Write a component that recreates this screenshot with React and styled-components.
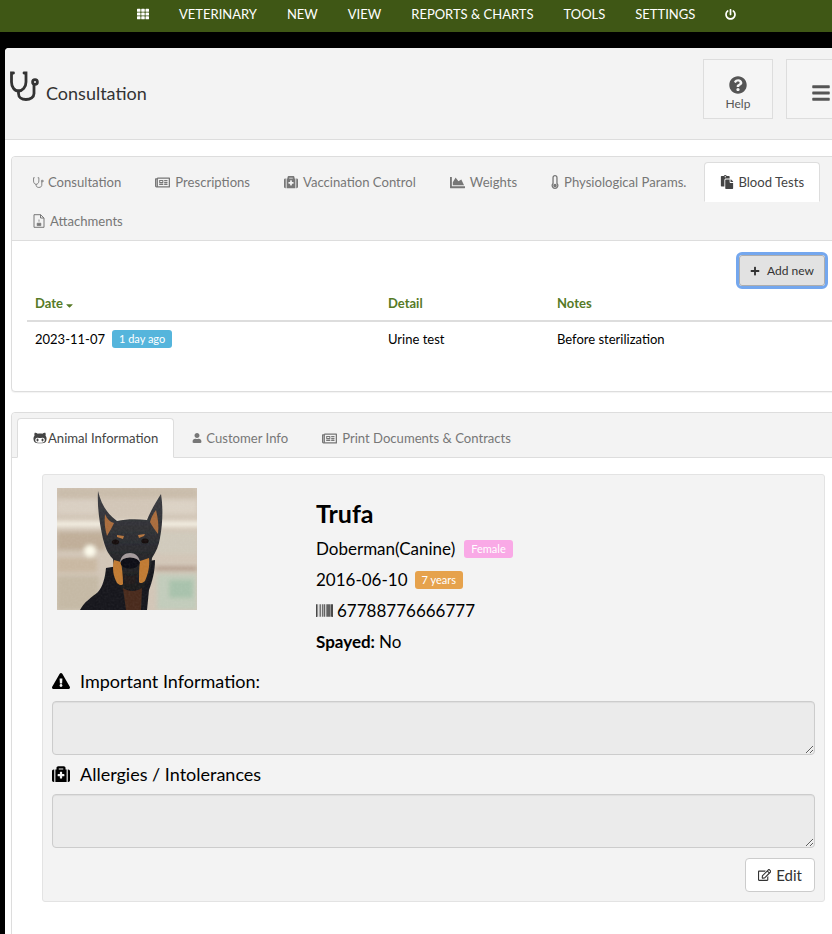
import React from 'react';
import styled, { createGlobalStyle } from 'styled-components';
import {
  FaTh, FaPowerOff, FaQuestionCircle, FaBars, FaRegNewspaper, FaMedkit, FaChartArea,
  FaThermometerEmpty, FaPaste, FaGithubAlt, FaUser, FaPlus, FaCaretDown,
  FaExclamationTriangle, FaBarcode, FaRegEdit,
} from 'react-icons/fa';

const GlobalStyle = createGlobalStyle`
  html, body {
    margin: 0;
    height: 934px;
    overflow: hidden;
    background: #000;
    font-family: Lato, "Open Sans", sans-serif;
    color: #000;
  }
  * { box-sizing: border-box; }
`;

const TopNav = styled.nav`
  display: flex;
  align-items: center;
  height: 32px;
  padding: 0 0 4px 122px;
  background: #3f5715;
  color: #fff;
  font-size: 13px;
`;

const NavItem = styled.a`
  display: flex;
  align-items: center;
  padding: 0 15px;
  white-space: nowrap;
  svg { font-size: ${({ $icon }) => $icon || '12px'}; }
`;

const Main = styled.main`
  width: 864px;
  height: 886px;
  margin: 16px 0 0 5px;
  background: #fff;
  border-top-left-radius: 4px;
  overflow: hidden;
`;

const PageHeader = styled.header`
  display: flex;
  align-items: flex-start;
  height: 92px;
  padding: 11px 13px 0 5px;
  background: #f3f3f3;
  border-bottom: 1px solid #ddd;
`;

const PageTitle = styled.h1`
  display: flex;
  align-items: flex-end;
  gap: 6px;
  flex: 1;
  margin: 12px 0 0;
  font-size: 18px;
  font-weight: 400;
  line-height: 22px;
  color: #333;
  svg { display: block; margin-bottom: 3px; }
`;

const HeaderButton = styled.button`
  display: flex;
  flex-direction: column;
  align-items: center;
  justify-content: center;
  gap: 2px;
  width: 70px;
  height: 60px;
  margin-left: 13px;
  padding: 8px 0 0;
  background: #f5f5f5;
  border: 1px solid #ddd;
  color: #555;
  font: 400 12px Lato, sans-serif;
  svg { font-size: ${({ $icon }) => $icon || '18px'}; }
`;

const Card = styled.section`
  margin: ${({ $top }) => $top} 6px 0;
  background: #fff;
  border: 1px solid #ddd;
  border-radius: 4px;
  box-shadow: 0 1px 1px rgba(0, 0, 0, 0.05);
`;

const TabStrip = styled.div`
  display: flex;
  flex-wrap: wrap;
  padding: 5px 5px 0;
  background: #f3f3f3;
  border-bottom: 1px solid #ddd;
  border-radius: 4px 4px 0 0;
`;

const Tab = styled.a`
  display: flex;
  align-items: center;
  gap: ${({ $gap }) => $gap || '5px'};
  height: 40px;
  margin: 0 2px -1px 0;
  padding: 0 15px;
  font-size: 13.1px;
  white-space: nowrap;
  color: ${({ $active }) => ($active ? '#444' : '#777')};
  background: ${({ $active }) => ($active ? '#fff' : 'transparent')};
  border: 1px solid ${({ $active }) => ($active ? '#ddd' : 'transparent')};
  border-bottom-color: ${({ $active }) => ($active ? '#fff' : 'transparent')};
  border-radius: 4px 4px 0 0;
  svg { flex: none; }
`;

const ThermoIcon = styled(FaThermometerEmpty)`
  width: 8px;
  height: 14px;
`;

const TabBody = styled.div`
  height: 150px;
  padding-top: 14px;
`;

const Toolbar = styled.div`
  display: flex;
  justify-content: flex-end;
  padding-right: 37px;
`;

const AddButton = styled.button`
  display: flex;
  align-items: center;
  gap: 7px;
  height: 31px;
  padding: 0 10px;
  background: #e2e2e2;
  border: 1px solid #adadad;
  border-radius: 3px;
  outline: 3px solid #74a7ee;
  outline-offset: 0;
  color: #333;
  font: 400 12px Lato, sans-serif;
`;

const HeadRow = styled.div`
  display: grid;
  grid-template-columns: 353px 169px 1fr;
  height: 33px;
  margin: 3px 0 0 15px;
  padding: 0 8px;
  font-size: 13px;
  font-weight: 700;
  line-height: 28px;
  color: #567a26;
  border-bottom: 2px solid #ddd;
`;

const DataRow = styled.div`
  display: grid;
  grid-template-columns: 353px 169px 1fr;
  align-items: center;
  height: 34px;
  margin-left: 15px;
  padding: 0 8px;
  font-size: 13px;
`;

const SortCaret = styled(FaCaretDown)`
  vertical-align: -3px;
  margin-left: -2px;
`;

const DateCell = styled.span`
  display: flex;
  align-items: center;
  gap: 7px;
`;

const Badge = styled.span`
  height: 18px;
  padding: 0 7px;
  line-height: 18px;
  border-radius: 3px;
  background: ${({ $color }) => $color};
  color: #fff;
  font-size: 11px;
  font-weight: 400;
`;

const Panel = styled.div`
  height: 520px;
  padding: 16px 37px 0 30px;
`;

const Well = styled.div`
  height: 428px;
  padding: 13px 9px 0;
  background: #f3f3f3;
  border: 1px solid #e3e3e3;
  border-radius: 3px;
`;

const Profile = styled.div`
  display: flex;
  height: 179px;
  padding-left: 5px;
`;

const Photo = styled.svg`
  display: block;
  flex: none;
  width: 140px;
  height: 122px;
  margin-right: 119px;
`;

const Facts = styled.div`
  display: flex;
  flex-direction: column;
  font-size: 17px;
  line-height: 31px;
`;

const PetName = styled.h2`
  margin: 6px 0 1px;
  font-size: 25px;
  line-height: 38px;
  font-weight: 700;
`;

const Fact = styled.div`
  display: flex;
  align-items: center;
  gap: ${({ $gap }) => $gap || '7px'};
  white-space: nowrap;
`;

const FieldLabel = styled.div`
  display: flex;
  align-items: center;
  gap: 10px;
  height: 30px;
  margin-top: ${({ $top }) => $top || '0'};
  padding-bottom: 2px;
  font-size: 18px;
  line-height: 22px;
  svg { flex: none; width: 18px; }
`;

const Note = styled.textarea`
  display: block;
  width: 763px;
  height: 54px;
  margin: 4px 0 0;
  background: #ebebeb;
  border: 1px solid #ccc;
  border-radius: 4px;
  box-shadow: inset 0 1px 1px rgba(0, 0, 0, 0.06);
  resize: both;
`;

const WellActions = styled.div`
  display: flex;
  justify-content: flex-end;
  width: 763px;
  margin-top: 10px;
`;

const EditButton = styled.button`
  display: flex;
  align-items: center;
  gap: 5px;
  width: 70px;
  height: 34px;
  padding: 0 12px;
  background: #fff;
  border: 1px solid #ccc;
  border-radius: 4px;
  color: #333;
  font: 400 15px Lato, sans-serif;
`;

const Stethoscope = ({ size = 30, width = 2.8 }) => (
  <svg width={size} height={size} viewBox="0 0 30 30" fill="none" stroke="currentColor" strokeWidth={width} strokeLinecap="round">
    <path d="M3.500 2H1.500v9c0 5 3 9 7 9s7.500-4 7.500-9V2h-2" />
    <path d="M8.500 20v2.500c0 3.600 3 6 7.500 6s8-2.500 8-6V14" />
    <circle cx="25" cy="11" r="2.400" />
  </svg>
);

const SmallFile = () => (
  <svg width="12" height="14" viewBox="0 0 12 14" fill="none" stroke="currentColor">
    <path d="M1 .7h6.600L11 4v9.300H1z" />
    <path d="M7.500 .7V4H11" />
    <path d="M6 5.500v2.200M4.200 9.200h3.600v2.400H4.200z" fill="currentColor" strokeWidth=".8" />
  </svg>
);

const DogPhoto = () => (
  <Photo viewBox="0 0 140 122">
    <defs>
      <filter id="soft" x="-20%" y="-20%" width="140%" height="140%">
        <feGaussianBlur stdDeviation="2.200" />
      </filter>
      <filter id="softer">
        <feGaussianBlur stdDeviation="0.600" />
      </filter>
      <filter id="grain">
        <feTurbulence type="fractalNoise" baseFrequency="0.5" numOctaves="2" seed="4" />
        <feColorMatrix values="0 0 0 0 1  0 0 0 0 1  0 0 0 0 1  0.9 0 0 0 -0.3" />
      </filter>
      <linearGradient id="face" x1="0" y1="0" x2="0" y2="1">
        <stop offset="0" stopColor="#3c3d42" />
        <stop offset="0.5" stopColor="#2c2d31" />
        <stop offset="1" stopColor="#18181b" />
      </linearGradient>
      <clipPath id="frame">
        <rect width="140" height="122" />
      </clipPath>
    </defs>
    <g clipPath="url(#frame)">
      <rect width="140" height="122" fill="#d2c6b7" />
      <g filter="url(#soft)">
        <rect x="0" y="0" width="140" height="10" fill="#c9bcaa" />
        <rect x="0" y="12" width="40" height="14" fill="#d9cfc2" />
        <rect x="100" y="12" width="40" height="14" fill="#dbd2c5" />
        <rect x="-5" y="33" width="150" height="6" fill="#f1ece0" />
        <rect x="0" y="44" width="48" height="18" fill="#c0ae99" />
        <rect x="100" y="44" width="40" height="22" fill="#d0cabc" />
        <circle cx="33" cy="63" r="6" fill="#fdfbec" />
        <rect x="0" y="70" width="40" height="14" fill="#c9b8a2" />
        <rect x="0" y="88" width="42" height="34" fill="#c5b9a5" />
        <rect x="100" y="86" width="40" height="36" fill="#c2ccbb" />
        <rect x="112" y="92" width="24" height="18" fill="#a8c2ac" />
        <rect x="98" y="79" width="42" height="3" fill="#a88e7e" />
      </g>
      <g filter="url(#softer)">
        <path d="M23 122c4-8 12-13 18-18 5-6 7-14 8-24l49-8c0 12-3 22-6 30l-2 20z" fill="#17181c" />
        <path d="M41 3c3 12 8 22 19 30 9-2 20-2 30-1 4-10 9-18 14-26 2 12 2 28-1 44-1 7-4 14-8 20-1 12-5 26-11 33-6 3-12 3-18 0-6-7-9-20-10-32-6-6-8-13-10-20-3-14-6-31-5-48z" fill="url(#face)" />
        <path d="M48 26c2 5 5 8 9 9-2 5-5 9-7 13-2-7-3-14-2-22z" fill="#a96c3d" />
        <path d="M99 22c-3 4-5 8-6 12 2 4 5 8 8 12 1-8 0-16-2-24z" fill="#a96c3d" />
        <path d="M57 72c-2 8-1 16 3 23 2 2 5 3 6 1 0-8-1-16-2-22z" fill="#c07a32" />
        <path d="M92 70c1 8-1 16-4 23-2 2-5 3-6 1 0-7 0-14 1-21z" fill="#c07a32" />
        <path d="M60 47l7 1-1 3-6-2zM88 46l-7 1 1 3 5-2z" fill="#b5763f" />
        <ellipse cx="58.500" cy="54" rx="3.600" ry="2.500" fill="#120f0b" />
        <ellipse cx="88" cy="53" rx="3.600" ry="2.500" fill="#120f0b" />
        <path d="M63 74c1-6 5-9 10-9s9 3 10 9c-6-3-14-3-20 0z" fill="#a3999b" />
        <ellipse cx="73" cy="75" rx="9.500" ry="5.500" fill="#0f0f12" />
        <path d="M66 86c3 3 11 3 14 0l-2 9c-3 2-7 2-10 0z" fill="#221d1c" />
        <path d="M66 100l3 22h15l1-22c-6 4-13 4-19 0z" fill="#4a2c1e" />
      </g>
      <rect width="140" height="122" filter="url(#grain)" opacity="0.1" />
    </g>
  </Photo>
);

const App = () => (
  <>
    <GlobalStyle />
    <TopNav>
      <NavItem><FaTh /></NavItem>
      <NavItem>VETERINARY</NavItem>
      <NavItem>NEW</NavItem>
      <NavItem>VIEW</NavItem>
      <NavItem>REPORTS &amp; CHARTS</NavItem>
      <NavItem>TOOLS</NavItem>
      <NavItem>SETTINGS</NavItem>
      <NavItem $icon="11px"><FaPowerOff /></NavItem>
    </TopNav>
    <Main>
      <PageHeader>
        <PageTitle>
          <Stethoscope />
          Consultation
        </PageTitle>
        <HeaderButton><FaQuestionCircle />Help</HeaderButton>
        <HeaderButton $icon="20px"><FaBars /></HeaderButton>
      </PageHeader>

      <Card $top="16px">
        <TabStrip>
          <Tab $gap="4px"><Stethoscope size={11} width={2.4} />Consultation</Tab>
          <Tab><FaRegNewspaper size={15} />Prescriptions</Tab>
          <Tab><FaMedkit size={14} />Vaccination Control</Tab>
          <Tab><FaChartArea size={15} />Weights</Tab>
          <Tab><ThermoIcon />Physiological Params.</Tab>
          <Tab $active $gap="4px"><FaPaste size={14} />Blood Tests</Tab>
          <Tab><SmallFile />Attachments</Tab>
        </TabStrip>
        <TabBody>
          <Toolbar>
            <AddButton><FaPlus size={10} />Add new</AddButton>
          </Toolbar>
          <HeadRow>
            <span>Date <SortCaret size={11} /></span>
            <span>Detail</span>
            <span>Notes</span>
          </HeadRow>
          <DataRow>
            <DateCell>2023-11-07 <Badge $color="#55b5dc">1 day ago</Badge></DateCell>
            <span>Urine test</span>
            <span>Before sterilization</span>
          </DataRow>
        </TabBody>
      </Card>

      <Card $top="20px">
        <TabStrip>
          <Tab $active $gap="1px"><FaGithubAlt size={14} />Animal Information</Tab>
          <Tab $gap="4px"><FaUser size={10} />Customer Info</Tab>
          <Tab><FaRegNewspaper size={15} />Print Documents &amp; Contracts</Tab>
        </TabStrip>
        <Panel>
          <Well>
            <Profile>
              <DogPhoto />
              <Facts>
                <PetName>Trufa</PetName>
                <Fact $gap="9px">Doberman(Canine) <Badge $color="#f9a9e6">Female</Badge></Fact>
                <Fact>2016-06-10 <Badge $color="#e6a24c">7 years</Badge></Fact>
                <Fact $gap="4px"><FaBarcode size={17} />67788776666777</Fact>
                <Fact $gap="4px"><b>Spayed:</b> No</Fact>
              </Facts>
            </Profile>
            <FieldLabel><FaExclamationTriangle size={18} />Important Information:</FieldLabel>
            <Note readOnly />
            <FieldLabel $top="5px"><FaMedkit size={18} />Allergies / Intolerances</FieldLabel>
            <Note readOnly />
            <WellActions>
              <EditButton><FaRegEdit size={14} />Edit</EditButton>
            </WellActions>
          </Well>
        </Panel>
      </Card>
    </Main>
  </>
);

export default App;
